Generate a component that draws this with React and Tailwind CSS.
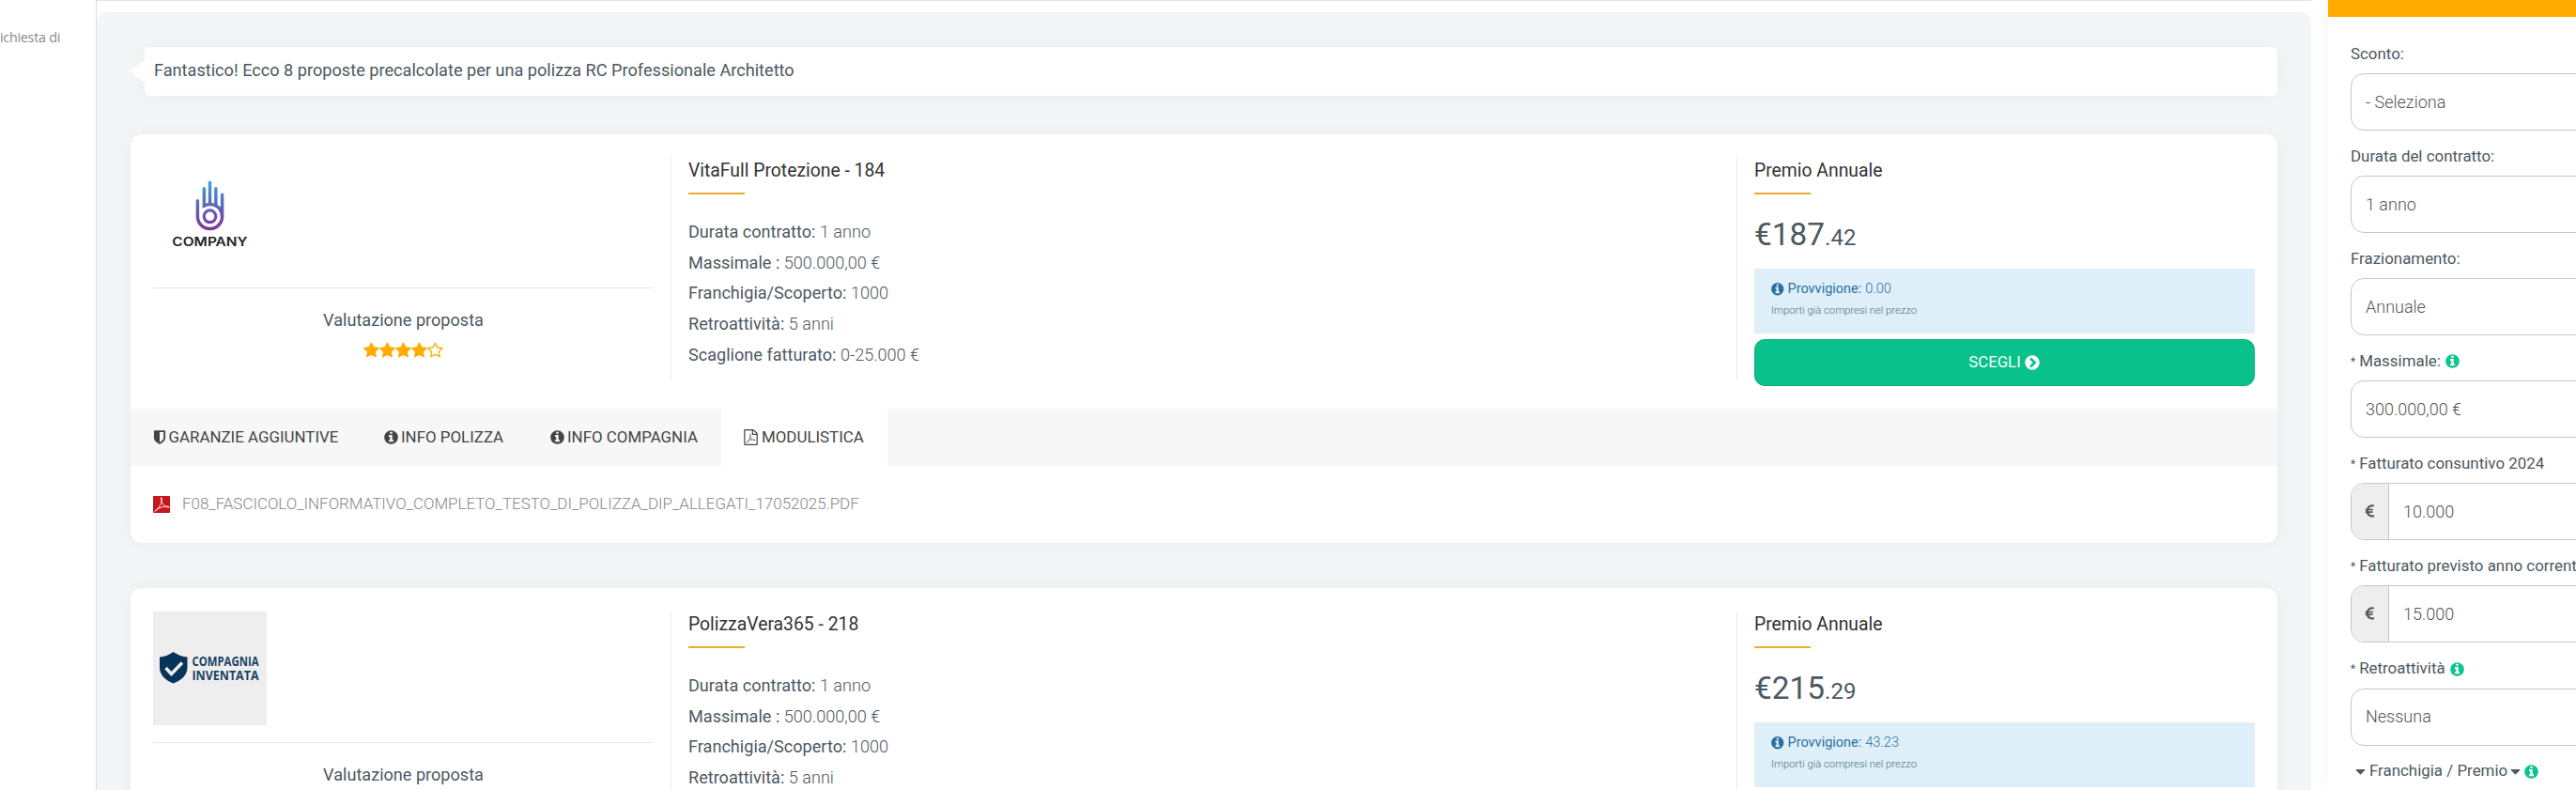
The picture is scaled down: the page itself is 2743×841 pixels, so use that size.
const VIEW = "0 0 1792 1792";
const PATHS = {
  info: "M1152 1376v-160q0-14-9-23t-23-9h-96v-512q0-14-9-23t-23-9h-320q-14 0-23 9t-9 23v160q0 14 9 23t23 9h96v320h-96q-14 0-23 9t-9 23v160q0 14 9 23t23 9h448q14 0 23-9t9-23zm-128-896v-160q0-14-9-23t-23-9h-192q-14 0-23 9t-9 23v160q0 14 9 23t23 9h192q14 0 23-9t9-23zm640 416q0 209-103 385.500t-279.500 279.500-385.500 103-385.500-103-279.500-279.500-103-385.500 103-385.500 279.500-279.500 385.500-103 385.500 103 279.500 279.500 103 385.500z",
  chevron: "M845 1395l454-454q19-19 19-45t-19-45l-454-454q-19-19-45-19t-45 19l-102 102q-19 19-19 45t19 45l307 307-307 307q-19 19-19 45t19 45l102 102q19 19 45 19t45-19zm819-499q0 209-103 385.500t-279.500 279.500-385.500 103-385.500-103-279.500-279.500-103-385.500 103-385.500 279.500-279.500 385.500-103 385.500 103 279.500 279.500 103 385.500z",
  shield: "M1344 960v-640h-448v1137q119-63 213-137 235-184 235-360zm192-768v768q0 86-33.500 170.500t-83 150-118 127.500-126.500 103-121 77.500-89.500 49.500-42.500 20q-12 6-26 6t-26-6q-16-7-42.500-20t-89.500-49.500-121-77.500-126.500-103-118-127.500-83-150-33.500-170.500v-768q0-26 19-45t45-19h1152q26 0 45 19t19 45z",
  pdf: "M1596 380q28 28 48 76t20 88v1152q0 40-28 68t-68 28h-1344q-40 0-68-28t-28-68v-1600q0-40 28-68t68-28h896q40 0 88 20t76 48zm-444-244v376h376q-10-29-22-41l-313-313q-12-12-41-22zm384 1528v-1024h-416q-40 0-68-28t-28-68v-416h-768v1536h1280zm-514-593q33 26 84 56 59-7 117-7 147 0 177 49 16 22 2 52 0 1-1 2l-2 2v1q-6 38-71 38-48 0-115-20t-130-53q-221 24-392 83-153 262-242 262-15 0-28-7l-24-12q-1-1-6-5-10-10-6-36 9-40 56-91.500t132-96.500q14-9 23 6 2 2 2 4 52-85 107-197 68-136 104-262-24-82-30.500-159.500t6.500-127.500q11-40 42-40h22q23 0 35 15 18 21 9 68-2 6-4 8 1 3 1 8v30q-2 123-14 192 55 164 146 238zm-576 411q52-24 137-158-51 40-87.500 84t-49.500 74zm398-920q-15 42-2 132 1-7 7-44 0-3 7-43 1-4 4-8-1-1-1-2t-1-2-1-3q-1-22-13-36 0 1-1 2v2zm-124 661q135-54 284-81-2-1-13-9.500t-16-13.500q-76-67-127-176-27 86-83 197-30 56-45 83zm646-16q-24-24-140-24 76 28 124 28 14 0 18-1 0-1-2-3z",
  star: "M1728 647q0 22-26 48l-363 354 86 500q1 7 1 20 0 21-10.500 35.500t-30.500 14.500q-19 0-40-12l-449-236-449 236q-22 12-40 12-21 0-31.500-14.500t-10.500-35.500q0-6 2-20l86-500-364-354q-25-27-25-48 0-37 56-46l502-73 225-455q19-41 49-41t49 41l225 455 502 73q56 9 56 46z",
  starO: "M1201 1004l306-297-422-62-189-382-189 382-422 62 306 297-73 421 378-199 377 199zm527-357q0 22-26 48l-363 354 86 500q1 7 1 20 0 50-41 50-19 0-40-12l-449-236-449 236q-22 12-40 12-21 0-31.500-14.500t-10.500-35.500q0-6 2-20l86-500-364-354q-25-27-25-48 0-37 56-46l502-73 225-455q19-41 49-41t49 41l225 455 502 73q56 9 56 46z",
  euro: "M1360 1307l35 159q3 12-3 22.500t-17 14.500l-5 1q-4 2-10.500 3.500t-16 4.500-21.500 5.500-25.500 5-30 5-33.500 4.500-36.500 3-38.500 1q-234 0-409-130.500t-238-351.500h-95q-13 0-22.500-9.500t-9.500-22.500v-113q0-13 9.500-22.500t22.500-9.500h66q-2-57 1-105h-67q-14 0-23-9t-9-23v-114q0-14 9-23t23-9h98q67-210 243.500-338t400.500-128q102 0 194 23 11 3 20 15 6 11 3 24l-43 159q-3 13-14 19.500t-24 2.500l-4-1q-4-1-11.500-2.500l-17.500-3.500-22.500-3.500-26-3-29-2.500-29.500-1q-126 0-226 64t-150 176h468q16 0 25 12 10 12 7 26l-24 114q-5 26-32 26h-488q-3 37 0 105h459q15 0 25 12 9 12 6 27l-24 112q-2 11-11 18.500t-20 7.500h-387q48 117 149.500 185.500t228.500 68.500q18 0 36-1.500t33.500-3.500 29.500-4.500 24.500-5 18.500-4.500l12-3 5-2q13-5 26 2 12 7 15 21z",
  caret: "M1408 704q0 26-19 45l-448 448q-19 19-45 19t-45-19l-448-448q-19-19-19-45t19-45 45-19h896q26 0 45 19t19 45z",
};

function Icon({ name, className, viewBox = VIEW }) {
  return (
    <svg viewBox={viewBox} className={`shrink-0 fill-current ${className}`} aria-hidden="true">
      <path d={PATHS[name]} />
    </svg>
  );
}

function HandLogo() {
  return (
    <svg viewBox="0 0 121 121" className="h-[120px] w-[121px]">
      <defs>
        <linearGradient id="hand" x1="0" y1="25" x2="0" y2="79" gradientUnits="userSpaceOnUse">
          <stop offset="0" stopColor="#3fa3d8" />
          <stop offset="0.55" stopColor="#5f62b4" />
          <stop offset="1" stopColor="#8e2f96" />
        </linearGradient>
      </defs>
      <g fill="none" stroke="url(#hand)" strokeWidth="3.5" strokeLinecap="round">
        <path d="M47.300 46V63a13.200 13.200 0 0 0 26.400 0V39.500" />
        <path d="M54.300 33V51.500Q60.600 48.500 67 51.500Q73.500 55 73.700 63" />
        <path d="M60.500 26.500V49" />
        <path d="M66.900 33V51" />
        <circle cx="60.500" cy="62.800" r="6.400" strokeWidth="3.200" />
      </g>
      <text x="20" y="94.500" textLength="81" lengthAdjust="spacingAndGlyphs" fontFamily="Inter, sans-serif" fontSize="13" fontWeight="600" fill="#222">
        COMPANY
      </text>
    </svg>
  );
}

function ShieldLogo() {
  return (
    <svg viewBox="0 0 121 121" className="h-[121px] w-[121px] bg-[#eee]">
      <path d="M21.500 43Q29 48 36.500 48.500V60Q36 71 21.500 76.500Q7.500 71 7 60V48.500Q14.500 48 21.500 43Z" fill="#063458" />
      <path d="M13.500 60L19.500 66.500L31 54.500" fill="none" stroke="#eee" strokeWidth="3.400" />
      <g fontFamily="Open Sans, sans-serif" fontSize="14.200" fontWeight="700" fill="#1a4265">
        <text x="41.500" y="58" textLength="71" lengthAdjust="spacingAndGlyphs">COMPAGNIA</text>
        <text x="41.500" y="72.500" textLength="71" lengthAdjust="spacingAndGlyphs">INVENTATA</text>
      </g>
    </svg>
  );
}

function PdfFileIcon() {
  return (
    <svg viewBox="0 0 18 18" className="h-[18px] w-[18px] shrink-0">
      <rect width="18" height="18" rx="1" fill="#c8161d" />
      <path d="M1.500 16.500C6 14 9.500 8 9.300 2.500C9.200 1 8 1.500 8.300 3C9 7.500 12 11.500 16.500 12.300C17.500 12.500 17 11 15.500 11C11 11 6 12.500 2.500 15.500" fill="none" stroke="#fff" strokeWidth="0.900" />
    </svg>
  );
}

function Heading({ children }) {
  return (
    <>
      <h2 className="text-[19.350px] leading-[27px] text-[#333]">{children}</h2>
      <div className="mt-[10px] h-[2px] w-[60px] bg-[#e9ac2c]" />
    </>
  );
}

function Stars({ value }) {
  return (
    <div className="mt-[10px] flex justify-center text-[#ffab00]">
      {[1, 2, 3, 4, 5].map((n) => (
        <Icon key={n} name={n <= value ? "star" : "starO"} viewBox="64 0 1664 1792" className="h-[18.200px] w-[16.900px]" />
      ))}
    </div>
  );
}

function Offer({ logo, title, details, price, cents, commission, children }) {
  return (
    <article className="rounded-[12px] bg-white pt-[25px] shadow-[0_0_20px_rgba(0,0,0,0.05)]">
      <div className="flex h-[237px] px-6">
        <div className="w-[552px] border-r border-[#ebebeb] pr-[18px]">
          <div className="flex">{logo}</div>
          <div className="mt-[18px] border-t border-[#e8e8e8]" />
          <p className="mt-[21px] text-center text-[18.100px] leading-[26px]">Valutazione proposta</p>
          <Stars value={4} />
        </div>
        <div className="flex-1 pl-[18px]">
          <Heading>{title}</Heading>
          <dl className="mt-[24px]">
            {details.map(([label, value]) => (
              <div key={label} className="flex gap-[4.500px] text-[18.100px] leading-[32.700px]">
                <dt>{label}</dt>
                <dd className="font-light">{value}</dd>
              </div>
            ))}
          </dl>
        </div>
        <div className="w-[552px] border-l border-[#ebebeb] pl-[18px]">
          <Heading>Premio Annuale</Heading>
          <p className="mt-[23px] h-[40px] text-[33.400px] leading-[40px]">
            €{price}
            <span className="text-[24px]">.{cents}</span>
          </p>
          <div className="mt-[16px] h-[69px] bg-[#deeff9] px-[18px] pt-[11px] text-[#2a6f9f]">
            <p className="flex items-center text-[14.500px] leading-[21px]">
              <Icon name="info" className="-ml-px mr-[3px] size-[15.500px]" />
              Provvigione:
              <span className="ml-[4px] font-light">{commission}</span>
            </p>
            <p className="mt-[5px] text-[11.250px] font-light leading-[16px] text-[#4c6f86]">Importi già compresi nel prezzo</p>
          </div>
          <button className="mt-[6px] flex h-[50px] w-full items-center justify-center rounded-[11px] border border-[#16a97c] bg-[#08c18b] text-[16.800px] text-white">
            SCEGLI
            <Icon name="chevron" className="ml-[3px] size-[18px]" />
          </button>
        </div>
      </div>
      {children}
    </article>
  );
}

const TABS = [
  ["shield", "GARANZIE AGGIUNTIVE", "w-[245px]", "64 0 1664 1792", "h-[17px] w-[16px] -ml-[1.500px] mr-[1px]"],
  ["info", "INFO POLIZZA", "w-[177px]", VIEW, "size-[17px] mr-[1px]"],
  ["info", "INFO COMPAGNIA", "w-[207px]", VIEW, "size-[17px] mr-[1px]"],
  ["pdf", "MODULISTICA", "w-[177px]", VIEW, "size-[17px] -ml-px mr-[2px]"],
];

function Documents() {
  return (
    <>
      <div className="mt-[30px] flex h-[61px] bg-[#f7f7f7] text-[16.900px] text-[#444]">
        {TABS.map(([icon, label, width, viewBox, size], i) => (
          <div key={label} className={`flex items-center gap-[1px] whitespace-nowrap pl-[24px] ${width} ${i === 3 ? "bg-white" : ""}`}>
            <Icon name={icon} viewBox={viewBox} className={size} />
            {label}
          </div>
        ))}
      </div>
      <div className="flex h-[82px] items-center gap-[13px] px-6 text-[16.950px] font-light text-[#888]">
        <PdfFileIcon />
        F08_FASCICOLO_INFORMATIVO_COMPLETO_TESTO_DI_POLIZZA_DIP_ALLEGATI_17052025.PDF
      </div>
    </>
  );
}

function Field({ label, value, required, info, euro }) {
  return (
    <div className="h-[109.100px]">
      <div className="flex h-[29px] items-center whitespace-nowrap text-[16.900px]">
        {required && <span className="mr-[4px] text-[12px]">*</span>}
        {label}
        {info && <Icon name="info" className="ml-[4px] size-[17px] text-[#0cc48e]" />}
      </div>
      <div className="mt-[6px] flex h-[61px] w-[320px] items-stretch overflow-hidden rounded-[14px] border border-[#c6c6c6] bg-white text-[18px] font-light text-[#555]">
        {euro && (
          <div className="flex w-[40px] items-center justify-center border-r border-[#c6c6c6] bg-[#eee]">
            <Icon name="euro" className="size-[17px]" />
          </div>
        )}
        <div className="flex items-center pb-[1px] pl-[15px]">{value}</div>
      </div>
    </div>
  );
}

const DETAILS = [
  ["Durata contratto:", "1 anno"],
  ["Massimale :", "500.000,00 €"],
  ["Franchigia/Scoperto:", "1000"],
  ["Retroattività:", "5 anni"],
  ["Scaglione fatturato:", "0-25.000 €"],
];

export default function App() {
  return (
    <div className="flex h-[841px] w-[2743px] overflow-hidden bg-white font-[Roboto,sans-serif] text-[#4d585f]">
      <div className="w-[103px] shrink-0 border-r border-[#d9dce0] pt-[30px]">
        <p className="font-['Open_Sans',sans-serif] text-[14.300px] leading-[20px] tracking-[-0.250px] text-[#888]">ichiesta di</p>
      </div>
      <div className="w-[2358px] shrink-0 border-t border-[#e4e4e4] pt-[12px]">
        <main className="h-[1000px] rounded-t-[12px] bg-[#f4f5f7] pl-[36px] pr-[36px] pt-[37px]">
          <div className="relative ml-[15px] flex h-[52px] items-center rounded-[5px] bg-white pb-[2px] pl-[10px] text-[18.150px] shadow-[0_0_20px_rgba(0,0,0,0.05)]">
            <svg viewBox="0 0 16 24" className="absolute -left-[16px] top-[14px] h-6 w-4 fill-white">
              <path d="M16 0V24L0 12Z" />
            </svg>
            Fantastico! Ecco 8 proposte precalcolate per una polizza RC Professionale Architetto
          </div>
          <div className="mt-[41px] flex flex-col gap-[48px]">
            <Offer logo={<HandLogo />} title="VitaFull Protezione - 184" details={DETAILS} price="187" cents="42" commission="0.00">
              <Documents />
            </Offer>
            <Offer logo={<ShieldLogo />} title="PolizzaVera365 - 218" details={DETAILS} price="215" cents="29" commission="43.23" />
          </div>
        </main>
      </div>
      <aside className="ml-[18px] w-[264px] shrink-0 overflow-hidden bg-white shadow-[0_0_20px_rgba(0,0,0,0.05)]">
        <div className="h-[18px] bg-[#ffab00]" />
        <div className="pl-[24px] pt-[25px]">
          <Field label="Sconto:" value="- Seleziona" />
          <Field label="Durata del contratto:" value="1 anno" />
          <Field label="Frazionamento:" value="Annuale" />
          <Field label="Massimale:" value="300.000,00 €" required info />
          <Field label="Fatturato consuntivo 2024" value="10.000" required euro />
          <Field label="Fatturato previsto anno corrente" value="15.000" required euro />
          <Field label="Retroattività" value="Nessuna" required info />
          <div className="flex h-[29px] items-center whitespace-nowrap pl-[2px] text-[16.900px]">
            <Icon name="caret" className="mr-[1px] size-[17px]" />
            Franchigia / Premio
            <Icon name="caret" className="size-[17px]" />
            <Icon name="info" className="size-[17px] text-[#0cc48e]" />
          </div>
        </div>
      </aside>
    </div>
  );
}
